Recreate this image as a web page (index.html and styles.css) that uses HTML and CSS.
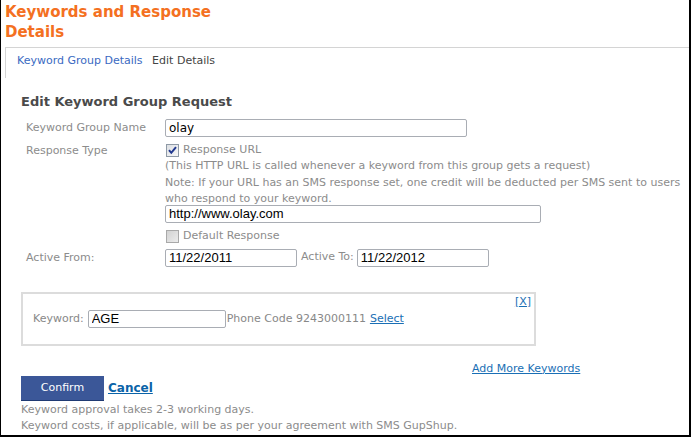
FILE: index.html
```html
<!DOCTYPE html>
<html>
<head>
<meta charset="utf-8">
<link rel="stylesheet" href="styles.css">
</head>
<body>
<div class="frame">
  <h1 class="title">Keywords and Response Details</h1>
  <div class="tabs">
    <a class="tab-link" href="#">Keyword Group Details</a>
    <span class="tab-current">Edit Details</span>
  </div>
  <h2 class="section-title">Edit Keyword Group Request</h2>
  <div class="form">
    <div class="label">Keyword Group Name</div>
    <div class="field"><input class="inp inp-name" type="text" value="olay"></div>

    <div class="label">Response Type</div>
    <div class="field">
      <label class="check-row"><span class="cb cb-on"><svg viewBox="0 0 13 13" width="13" height="13"><path d="M3 6.2 L5.3 8.8 L10 3.2" fill="none" stroke="#21388f" stroke-width="2"/></svg></span>Response URL</label>
      <div class="note">(This HTTP URL is called whenever a keyword from this group gets a request)</div>
      <div class="note">Note: If your URL has an SMS response set, one credit will be deducted per SMS sent to users who respond to your keyword.</div>
      <input class="inp inp-url" type="text" value="http://www.olay.com">
      <label class="check-row check-default"><span class="cb cb-off"></span>Default Response</label>
    </div>

    <div class="label label-active">Active From:</div>
    <div class="field field-dates">
      <input class="inp inp-date" type="text" value="11/22/2011">
      <span class="label-to">Active To:</span>
      <input class="inp inp-date" type="text" value="11/22/2012">
    </div>
  </div>

  <div class="kw-box">
    <a class="close-link" href="#">[X]</a>
    <div class="kw-row">
      <span class="kw-label">Keyword:</span>
      <input class="inp inp-kw" type="text" value="AGE">
      <span class="phone">Phone Code 9243000111</span>
      <a class="select-link" href="#">Select</a>
    </div>
  </div>

  <div class="add-row"><a class="add-link" href="#">Add More Keywords</a></div>

  <div class="actions">
    <button class="btn-confirm" type="button">Confirm</button>
    <a class="cancel-link" href="#">Cancel</a>
  </div>
  <p class="foot foot-first">Keyword approval takes 2-3 working days.</p>
  <p class="foot">Keyword costs, if applicable, will be as per your agreement with SMS GupShup.</p>
</div>
</body>
</html>
```

FILE: styles.css
```css
html, body {
  margin: 0;
  padding: 0;
  background: #fff;
}
body {
  width: 691px;
  height: 437px;
  overflow: hidden;
  font-family: "DejaVu Sans", Verdana, sans-serif;
  font-size: 11px;
  color: #888;
}
.frame {
  box-sizing: border-box;
  width: 691px;
  height: 437px;
  border-left: 1px solid #000;
  border-right: 2px solid #000;
  border-bottom: 2px solid #000;
  padding: 0 0 0 4px;
  overflow: hidden;
}
.title {
  margin: 0;
  width: 230px;
  padding: 2px 0 0 0;
  font-size: 15px;
  line-height: 20px;
  font-weight: bold;
  color: #f47021;
  height: 45px;
}
.tabs {
  border-top: 1px solid #d4d4d4;
  border-left: 1px solid #d4d4d4;
  padding: 6px 0 0 11px;
  height: 24px;
  font-size: 11px;
}
.tab-link {
  color: #3a6ac2;
  text-decoration: none;
  margin-right: 6px;
}
.tab-current {
  color: #444;
}
.section-title {
  margin: 15px 0 0 16px;
  font-size: 13px;
  font-weight: bold;
  color: #4a4a4a;
  line-height: 18px;
}
.form {
  margin: 8px 0 0 21px;
  display: grid;
  grid-template-columns: 139px 1fr;
  row-gap: 5px;
  line-height: 16.5px;
}
.label {
  color: #8c8c8c;
  padding-top: 1px;
}
.label-active {
  padding-top: 0;
}
.field {
  display: flex;
  flex-direction: column;
  align-items: flex-start;
}
.inp {
  box-sizing: border-box;
  height: 18px;
  border: 1px solid #a9adb4;
  border-radius: 2px;
  padding: 0 3px;
  margin: 0;
  font-family: "Liberation Sans", Arial, sans-serif;
  font-size: 13px;
  color: #000;
  background: #fff;
  outline: none;
}
.inp-name {
  width: 302px;
  font-family: "DejaVu Sans", Verdana, sans-serif;
  font-size: 12px;
}
.inp-url {
  width: 376px;
  margin-top: -3px;
}
.check-row {
  display: flex;
  align-items: center;
  color: #8c8c8c;
  height: 16px;
}
.cb {
  box-sizing: border-box;
  width: 13px;
  height: 13px;
  margin: 0 4px 0 1px;
  border: 1px solid #8f9aa6;
  background: linear-gradient(135deg, #dcdfe3, #f8f8f8);
  display: inline-block;
}
.cb svg {
  display: block;
  margin: -1px 0 0 -1px;
}
.cb-off {
  border-color: #a9a9a9;
  background: linear-gradient(135deg, #d2d2d2, #ececec);
}
.check-default {
  margin-top: 6px;
}
.note {
  color: #8c8c8c;
}
.field-dates {
  flex-direction: row;
  align-items: center;
  margin-top: -1px;
}
.inp-date {
  width: 132px;
}
.label-to {
  margin: 0 3px 0 4px;
  color: #8c8c8c;
}
.kw-box {
  position: relative;
  box-sizing: border-box;
  margin: 25px 0 0 16px;
  width: 515px;
  height: 54px;
  border: 2px solid #dcdcdc;
  padding: 16px 0 0 10px;
}
.close-link {
  position: absolute;
  right: 3px;
  top: 1px;
  color: #1a6fb5;
  font-size: 11px;
}
.kw-row {
  display: flex;
  align-items: center;
}
.kw-label {
  margin-right: 4px;
}
.inp-kw {
  width: 138px;
  margin-right: 1px;
}
.select-link {
  margin-left: 4px;
  color: #1a6fb5;
}
.add-row {
  margin: 16px 0 0 0;
  padding-left: 467px;
  height: 14px;
}
.add-link {
  color: #1a6fb5;
}
.actions {
  display: flex;
  align-items: center;
  margin: 0 0 0 16px;
}
.btn-confirm {
  box-sizing: border-box;
  width: 83px;
  height: 25px;
  margin: 0;
  border: none;
  border-bottom: 1px solid #1f3a73;
  background: #3b5798;
  color: #fff;
  font-family: "DejaVu Sans", Verdana, sans-serif;
  font-size: 11px;
  padding: 0;
}
.cancel-link {
  margin-left: 4px;
  font-weight: bold;
  font-size: 12px;
  color: #0a63a8;
}
.foot {
  margin: 0 0 0 16px;
  line-height: 16px;
  color: #8c8c8c;
}
.foot-first {
  margin-top: 1px;
}
```
